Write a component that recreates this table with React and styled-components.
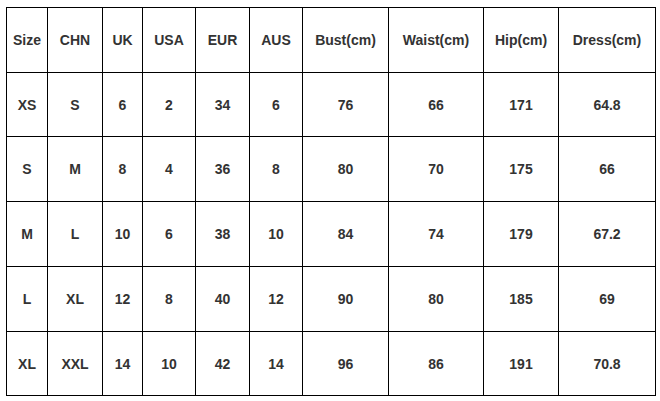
import React from 'react';
import styled, { createGlobalStyle } from 'styled-components';

const GlobalStyle = createGlobalStyle`
  html, body {
    margin: 0;
    padding: 0;
    background: #fff;
  }
`;

const Wrap = styled.div`
  padding: 7px 0 0 6px;
`;

const Table = styled.table`
  border-collapse: collapse;
  table-layout: fixed;
  width: 650px;
  font-family: "Liberation Sans", Arial, sans-serif;
  font-size: 14px;
  font-weight: bold;
  color: #333;
`;

const Cell = styled.td`
  border: 1px solid #000;
  height: ${(p) => p.$h}px;
  padding: 0;
  text-align: center;
  vertical-align: middle;
`;

const widths = [41, 55, 40, 53, 54, 53, 86, 95, 75, 97];
const heights = [64, 63, 64, 64, 64, 63];

const header = ['Size', 'CHN', 'UK', 'USA', 'EUR', 'AUS', 'Bust(cm)', 'Waist(cm)', 'Hip(cm)', 'Dress(cm)'];
const rows = [
  ['XS', 'S', '6', '2', '34', '6', '76', '66', '171', '64.8'],
  ['S', 'M', '8', '4', '36', '8', '80', '70', '175', '66'],
  ['M', 'L', '10', '6', '38', '10', '84', '74', '179', '67.2'],
  ['L', 'XL', '12', '8', '40', '12', '90', '80', '185', '69'],
  ['XL', 'XXL', '14', '10', '42', '14', '96', '86', '191', '70.8'],
];

export default function App() {
  const all = [header, ...rows];
  return (
    <Wrap>
      <GlobalStyle />
      <Table>
        <colgroup>
          {widths.map((w, i) => (
            <col key={i} style={{ width: w }} />
          ))}
        </colgroup>
        <tbody>
          {all.map((r, ri) => (
            <tr key={ri}>
              {r.map((c, ci) => (
                <Cell key={ci} $h={heights[ri]}>{c}</Cell>
              ))}
            </tr>
          ))}
        </tbody>
      </Table>
    </Wrap>
  );
}
